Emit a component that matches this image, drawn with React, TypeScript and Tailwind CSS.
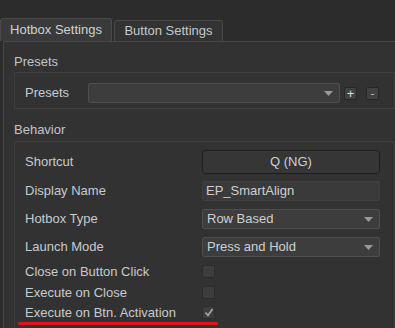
import React from "react";

const font = { fontFamily: '"Liberation Sans", Arial, sans-serif' };

function Arrow() {
  return (
    <svg width="9" height="5" viewBox="0 0 9 5" className="shrink-0">
      <polygon points="0,0 9,0 4.5,5" fill="#9a9a9a" />
    </svg>
  );
}

function Combo({ value, className = "" }: { value?: string; className?: string }) {
  return (
    <div
      className={`flex h-[20px] items-center justify-between rounded-[2px] border border-[#4e4e4e] bg-[#3d3d3d] pl-[4px] pr-[6px] text-[13px] text-[#cdd0d3] ${className}`}
    >
      <span>{value}</span>
      <Arrow />
    </div>
  );
}

function Checkbox({ checked = false }: { checked?: boolean }) {
  return (
    <div className="flex h-[13px] w-[13px] items-center justify-center border border-[#2c2c2c] bg-[#3d3d3d]">
      {checked && (
        <svg width="10" height="9" viewBox="0 0 10 9">
          <polyline points="1.5,4.5 4,7.5 8.5,1" fill="none" stroke="#a8a8a8" strokeWidth="1.6" />
        </svg>
      )}
    </div>
  );
}

function Row({ label, children, className = "" }: { label: string; children: React.ReactNode; className?: string }) {
  return (
    <div className={`flex items-center ${className}`}>
      <div className="w-[177px] shrink-0 text-[13px] leading-[16px] text-[#c6cbcf]">{label}</div>
      {children}
    </div>
  );
}

export default function App() {
  return (
    <div className="h-[328px] w-[395px] overflow-hidden bg-[#2c2c2c]" style={font}>
      {/* tabs */}
      <div className="flex h-[41px] items-end pt-[18px]">
        <div className="flex h-[23px] w-[112px] items-center justify-center rounded-t-[3px] border border-b-0 border-[#4a4a4a] bg-[#3a3a3a] text-[13px] text-[#cdd2d6]">
          Hotbox Settings
        </div>
        <div className="ml-[2px] flex h-[21px] w-[109px] items-center justify-center rounded-t-[3px] border border-b-0 border-[#484848] bg-[#333333] text-[13px] text-[#c4c9cd]">
          Button Settings
        </div>
      </div>

      {/* pane */}
      <div className="ml-[3px] h-[287px] border-l border-t border-[#474747] bg-[#323232] pl-[10px] pt-[12px]">
        <div className="flex h-[16px] items-center text-[13px] text-[#c0c5c9]">Presets</div>
        <div className="mt-[2px] h-[37px] border border-[#3e3e3e] pl-[10px] pt-[10px]">
          <div className="flex items-center">
            <div className="w-[63px] shrink-0 text-[13px] leading-[16px] text-[#c6cbcf]">Presets</div>
            <Combo className="w-[252px]" />
            <div className="ml-[4px] flex h-[13px] w-[13px] items-center justify-center rounded-[2px] border border-[#262626] bg-[#414141] text-[13px] leading-none text-[#d8e0d8]">
              +
            </div>
            <div className="ml-[9px] flex h-[13px] w-[13px] items-center justify-center rounded-[2px] border border-[#262626] bg-[#414141] text-[11px] leading-none text-[#d0c8c8]">
              -
            </div>
          </div>
        </div>

        <div className="mt-[13px] flex h-[16px] items-center text-[13px] text-[#c0c5c9]">Behavior</div>
        <div className="mt-[3px] h-[200px] border border-[#3e3e3e] pl-[10px] pt-[8px]">
          <Row label="Shortcut">
            <div className="flex h-[24px] w-[178px] items-center justify-center rounded-[4px] border border-[#1e1e1e] bg-[#363636] text-[13px] text-[#cdd0d3]">
              Q (NG)
            </div>
          </Row>
          <Row label="Display Name" className="mt-[7px]">
            <div className="flex h-[20px] w-[178px] items-center rounded-[2px] border border-[#3f3f3f] bg-[#3a3a3a] pl-[3px] text-[13px] text-[#cdd0d3]">
              EP_SmartAlign
            </div>
          </Row>
          <Row label="Hotbox Type" className="mt-[8px]">
            <Combo value="Row Based" className="w-[178px]" />
          </Row>
          <Row label="Launch Mode" className="mt-[8px]">
            <Combo value="Press and Hold" className="w-[178px]" />
          </Row>
          <Row label="Close on Button Click" className="mt-[8px] h-[13px]">
            <Checkbox />
          </Row>
          <Row label="Execute on Close" className="mt-[8px] h-[13px]">
            <Checkbox />
          </Row>
          <div className="relative">
            <Row label="Execute on Btn. Activation" className="mt-[7px] h-[13px]">
              <Checkbox checked />
            </Row>
            <div className="absolute left-[-7px] top-[16px] h-[3px] w-[200px] rounded-full bg-[#e0161b]" />
          </div>
        </div>
      </div>
    </div>
  );
}
